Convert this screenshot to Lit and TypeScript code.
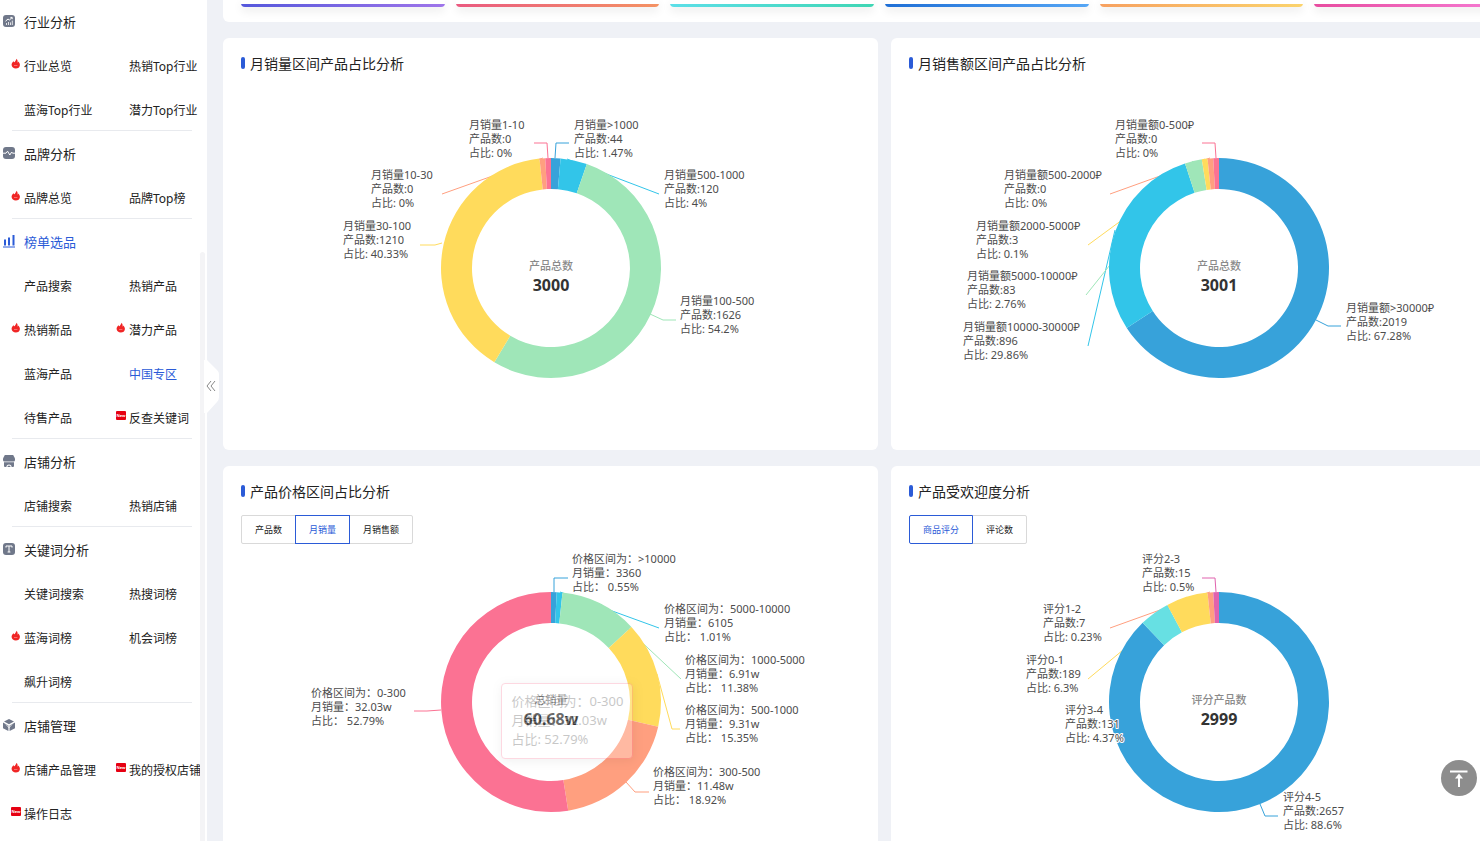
import { LitElement, html, svg, css, nothing } from "lit";
import { customElement, property } from "lit/decorators.js";
import { classMap } from "lit/directives/class-map.js";

type Point = [number, number];
interface Slice { color: string; to: number; line: Point[]; }
interface Label { x: number; y: number; rows: string[]; }
interface Chart {
  title: string;
  caption: string;
  total: string;
  tabs?: string[];
  active?: number;
  tooltip?: string[];
  slices: Slice[];
  labels: Label[];
}
interface Item { text: string; mark?: "hot" | "new"; active?: boolean; }
interface Group { title: string; icon: string; active?: boolean; items: Item[]; }

const BLUE = "#37a2da";
const CYAN = "#32c5e9";
const GREEN = "#9fe6b8";
const YELLOW = "#ffdb5c";
const SALMON = "#ff9f7f";
const PINK = "#fb7293";
const TEAL = "#67e0e3";
const MAGENTA = "#e062ae";

const groups: Group[] = [
  { title: "行业分析", icon: "trend", items: [
    { text: "行业总览", mark: "hot" }, { text: "热销Top行业" },
    { text: "蓝海Top行业" }, { text: "潜力Top行业" } ] },
  { title: "品牌分析", icon: "pulse", items: [
    { text: "品牌总览", mark: "hot" }, { text: "品牌Top榜" } ] },
  { title: "榜单选品", icon: "bars", active: true, items: [
    { text: "产品搜索" }, { text: "热销产品" },
    { text: "热销新品", mark: "hot" }, { text: "潜力产品", mark: "hot" },
    { text: "蓝海产品" }, { text: "中国专区", active: true },
    { text: "待售产品" }, { text: "反查关键词", mark: "new" } ] },
  { title: "店铺分析", icon: "shop", items: [
    { text: "店铺搜索" }, { text: "热销店铺" } ] },
  { title: "关键词分析", icon: "letter", items: [
    { text: "关键词搜索" }, { text: "热搜词榜" },
    { text: "蓝海词榜", mark: "hot" }, { text: "机会词榜" },
    { text: "飙升词榜" } ] },
  { title: "店铺管理", icon: "cube", items: [
    { text: "店铺产品管理", mark: "hot" }, { text: "我的授权店铺", mark: "new" },
    { text: "操作日志", mark: "new" } ] },
];

const charts: Chart[] = [
  {
    title: "月销量区间产品占比分析", caption: "产品总数", total: "3000",
    slices: [
      { color: BLUE, to: 5, line: [[18, -125], [5, -125], [4, -110]] },
      { color: CYAN, to: 19, line: [[108, -74], [16, -109]] },
      { color: GREEN, to: 211, line: [[125, 52], [112, 52], [99, 46]] },
      { color: YELLOW, to: 354, line: [[-131, -23], [-116, -23], [-109, -25]] },
      { color: SALMON, to: 357, line: [[-109, -74], [-8, -110]] },
      { color: PINK, to: 360, line: [[-17, -125], [-4, -125], [-3, -110]] },
    ],
    labels: [
      { x: -82, y: -139, rows: ["月销量1-10", "产品数:0", "占比: 0%"] },
      { x: 23, y: -139, rows: ["月销量>1000", "产品数:44", "占比: 1.47%"] },
      { x: 113, y: -89, rows: ["月销量500-1000", "产品数:120", "占比: 4%"] },
      { x: 129, y: 37, rows: ["月销量100-500", "产品数:1626", "占比: 54.2%"] },
      { x: -180, y: -89, rows: ["月销量10-30", "产品数:0", "占比: 0%"] },
      { x: -208, y: -38, rows: ["月销量30-100", "产品数:1210", "占比: 40.33%"] },
    ],
  },
  {
    title: "月销售额区间产品占比分析", caption: "产品总数", total: "3001",
    slices: [
      { color: BLUE, to: 237, line: [[122, 58], [109, 58], [97, 52]] },
      { color: CYAN, to: 342, line: [[-131, 78], [-104, -38]] },
      { color: GREEN, to: 351, line: [[-133, 27], [-26, -107]] },
      { color: YELLOW, to: 354, line: [[-131, -23], [-14, -109]] },
      { color: SALMON, to: 357, line: [[-109, -74], [-9, -110]] },
      { color: PINK, to: 360, line: [[-17, -125], [-4, -125], [-3, -110]] },
    ],
    labels: [
      { x: -104, y: -139, rows: ["月销量额0-500₽", "产品数:0", "占比: 0%"] },
      { x: -215, y: -89, rows: ["月销量额500-2000₽", "产品数:0", "占比: 0%"] },
      { x: -243, y: -38, rows: ["月销量额2000-5000₽", "产品数:3", "占比: 0.1%"] },
      { x: -252, y: 12, rows: ["月销量额5000-10000₽", "产品数:83", "占比: 2.76%"] },
      { x: -256, y: 63, rows: ["月销量额10000-30000₽", "产品数:896", "占比: 29.86%"] },
      { x: 127, y: 44, rows: ["月销量额>30000₽", "产品数:2019", "占比: 67.28%"] },
    ],
  },
  {
    title: "产品价格区间占比分析", caption: "总销量", total: "60.68w",
    tabs: ["产品数", "月销量", "月销售额"], active: 1,
    tooltip: ["价格区间为：0-300", "月销量：32.03w", "占比: 52.79%"],
    slices: [
      { color: BLUE, to: 3, line: [[17, -124], [3, -124], [3, -110]] },
      { color: CYAN, to: 6, line: [[108, -74], [9, -110]] },
      { color: GREEN, to: 47, line: [[130, -23], [50, -98]] },
      { color: YELLOW, to: 103, line: [[129, 27], [121, 27], [106, -28]] },
      { color: SALMON, to: 171, line: [[98, 90], [84, 90], [75, 80]] },
      { color: PINK, to: 360, line: [[-137, 9], [-124, 9], [-110, 8]] },
    ],
    labels: [
      { x: 21, y: -139, rows: ["价格区间为：>10000", "月销量：3360", "占比： 0.55%"] },
      { x: 113, y: -89, rows: ["价格区间为：5000-10000", "月销量：6105", "占比： 1.01%"] },
      { x: 134, y: -38, rows: ["价格区间为：1000-5000", "月销量：6.91w", "占比： 11.38%"] },
      { x: 134, y: 12, rows: ["价格区间为：500-1000", "月销量：9.31w", "占比： 15.35%"] },
      { x: 102, y: 74, rows: ["价格区间为：300-500", "月销量：11.48w", "占比： 18.92%"] },
      { x: -240, y: -5, rows: ["价格区间为：0-300", "月销量：32.03w", "占比： 52.79%"] },
    ],
  },
  {
    title: "产品受欢迎度分析", caption: "评分产品数", total: "2999",
    tabs: ["商品评分", "评论数"], active: 0,
    slices: [
      { color: BLUE, to: 316, line: [[59, 114], [46, 114], [41, 102]] },
      { color: TEAL, to: 332, line: [] },
      { color: YELLOW, to: 354, line: [[-131, -23], [-32, -105]] },
      { color: SALMON, to: 357, line: [[-109, -74], [-9, -110]] },
      { color: MAGENTA, to: 360, line: [[-17, -124], [-4, -124], [-3, -110]] },
    ],
    labels: [
      { x: -77, y: -139, rows: ["评分2-3", "产品数:15", "占比: 0.5%"] },
      { x: -176, y: -89, rows: ["评分1-2", "产品数:7", "占比: 0.23%"] },
      { x: -193, y: -38, rows: ["评分0-1", "产品数:189", "占比: 6.3%"] },
      { x: -154, y: 12, rows: ["评分3-4", "产品数:131", "占比: 4.37%"] },
      { x: 64, y: 99, rows: ["评分4-5", "产品数:2657", "占比: 88.6%"] },
    ],
  },
];

const polar = (r: number, deg: number): string => {
  const a = (deg * Math.PI) / 180;
  return `${(r * Math.sin(a)).toFixed(2)} ${(-r * Math.cos(a)).toFixed(2)}`;
};

const sector = (from: number, to: number): string => {
  const large = to - from > 180 ? 1 : 0;
  return `M${polar(110, from)}A110 110 0 ${large} 1 ${polar(110, to)}L${polar(79, to)}A79 79 0 ${large} 0 ${polar(79, from)}Z`;
};

@customElement("donut-card")
export class DonutCard extends LitElement {
  @property({ attribute: false }) chart!: Chart;

  static styles = css`
    :host { display: block; background: #fff; border-radius: 6px; color: #222; }
    .title {
      display: flex; align-items: center; gap: 5px; height: 49px; margin: 0;
      padding: 0 18px; box-sizing: border-box;
      font-size: 14px; font-weight: 400;
    }
    .title::before { content: ""; width: 4px; height: 12px; border-radius: 2px; background: #2b5bd7; }
    .tabs { display: flex; padding: 0 18px; }
    .tab {
      height: 29px; padding: 0 13px; margin: 0 0 0 -1px; border: 1px solid #d9d9d9;
      background: #fff; color: #222; font: inherit; font-size: 9px; position: relative;
    }
    .tab:first-child { margin-left: 0; border-radius: 2px 0 0 2px; }
    .tab:last-child { border-radius: 0 2px 2px 0; }
    .tab.on { border-color: #2b5bd7; color: #2b5bd7; z-index: 1; }
    .plot { position: relative; }
    .plot svg { display: block; width: 100%; overflow: visible; }
    .tall { height: 363px; }
    .short { height: 334px; }
    .label { font-size: 11px; fill: #4c4c4c; stroke: #fff; stroke-width: 2px; paint-order: stroke; stroke-linejoin: round; }
    .leader { fill: none; stroke-width: 1px; }
    .caption { font-size: 11px; font-weight: 500; fill: #8a8a8a; text-anchor: middle; }
    .total { font-size: 16px; font-weight: 700; fill: #333; text-anchor: middle; }
    .tooltip {
      position: absolute; left: calc(50% - 50px); top: 139px; box-sizing: border-box;
      padding: 8px 9px 9px 10px; border: 1px solid #fb7293; border-radius: 4px;
      background: #fff; color: #333; font-size: 13px; line-height: 19px; white-space: nowrap;
      box-shadow: 1px 2px 10px rgba(0, 0, 0, 0.2); opacity: 0.27;
    }
  `;

  render() {
    const c = this.chart;
    let from = 0;
    const arcs = c.slices.map((s) => {
      const d = sector(from, s.to);
      from = s.to;
      return svg`<path d=${d} fill=${s.color}></path>`;
    });
    const view = c.tabs ? "-328 -158 655 334" : "-328 -181 655 363";
    return html`
      <h2 class="title">${c.title}</h2>
      ${c.tabs
        ? html`<div class="tabs">
            ${c.tabs.map((t, i) => html`<button class=${classMap({ tab: true, on: i === c.active })}>${t}</button>`)}
          </div>`
        : nothing}
      <div class="plot">
        <svg class=${c.tabs ? "short" : "tall"} viewBox=${view} role="img" aria-label=${c.title}>
          ${c.slices.map((s) => svg`<polyline class="leader" stroke=${s.color} points=${s.line.map((p) => p.join(",")).join(" ")}></polyline>`)}
          ${arcs}
          ${c.labels.map((l) => svg`<text class="label">${l.rows.map(
            (r, i) => svg`<tspan x=${l.x} y=${l.y + i * 14}>${r}</tspan>`)}</text>`)}
          <text class="caption" x="0" y="2">${c.caption}</text>
          <text class="total" x="0" y="23">${c.total}</text>
        </svg>
        ${c.tooltip ? html`<div class="tooltip">${c.tooltip.map((r) => html`<div>${r}</div>`)}</div>` : nothing}
      </div>
    `;
  }
}

const groupIcons: Record<string, unknown> = {
  trend: svg`<rect width="12" height="12" rx="3" fill="#70788a"></rect>
    <path d="M2.5 6.2L5 4l1.4 1L9 2.6M7.4 2.4h1.8v1.8" stroke="#fff" fill="none"></path>
    <path d="M3.5 8v2M5.5 7v3M7.5 7.4V10M9.3 5.6V10" stroke="#fff" stroke-width=".8"></path>`,
  pulse: svg`<rect width="12" height="12" rx="3" fill="#70788a"></rect>
    <path d="M0 6.2h3l1.6-2 2.2 3.8 1.9-3 .8 1.2H12" stroke="#fff" fill="none"></path>`,
  bars: svg`<path d="M0 12h12" stroke="#2b5bd7"></path>
    <path d="M2 4.500V10.500M6 2.500V10.500M10.500 0V10.500" stroke="#2b5bd7" stroke-width="2"></path>`,
  shop: svg`<path d="M1.8 0h8.4L12 3.4V5a1.5 1.5 0 0 1-1.5 1.5h-9A1.5 1.5 0 0 1 0 5V3.4z" fill="#70788a"></path>
    <path d="M1 7.2h10V11a1 1 0 0 1-1 1H8.6a2.600 2.600 0 0 0-5.200 0H2a1 1 0 0 1-1-1z" fill="#70788a"></path>
    <path d="M4.400 12a1.600 1.600 0 0 1 3.200 0z" fill="#70788a"></path>`,
  letter: svg`<rect width="12" height="12" rx="3" fill="#70788a"></rect>
    <path d="M3 4.6V3h6v1.6M6 3v6M4.6 9h2.8" stroke="#fff" fill="none"></path>`,
  cube: svg`<path d="M6 0l5 2.6-5 2.7-5-2.7z" fill="#70788a"></path>
    <path d="M0 3.6l5.4 2.9V12L0 9.2zM12 3.6L6.6 6.5V12L12 9.2z" fill="#70788a"></path>
    <path d="M3 5.4l3 3.4 3-3.4" stroke="#fff" stroke-width=".7" fill="none"></path>`,
};

@customElement("side-menu")
export class SideMenu extends LitElement {
  static styles = css`
    :host {
      display: flex; box-sizing: border-box; width: 207px; flex: none; height: 100vh;
      background: #fff; color: #222; position: relative;
    }
    .list { width: 200px; height: 100%; overflow: hidden; }
    .head {
      display: flex; align-items: center; gap: 9px; height: 44px; margin: 0;
      padding: 0 0 2px 3px; box-sizing: border-box; font-size: 13px; font-weight: 400;
    }
    .head svg { overflow: visible; }
    .items { display: grid; grid-template-columns: 105px 1fr; padding-left: 10px; }
    .group:not(:last-child)::after {
      content: ""; display: block; height: 1px; margin: -2px 8px 1px 12px; background: #e8eaee;
    }
    .item {
      display: flex; align-items: center; gap: 3px; height: 44px; white-space: nowrap;
      color: inherit; text-decoration: none; font-size: 12px;
    }
    .on { color: #2b5bd7; }
    .mark { width: 11px; height: 13px; padding-bottom: 3px; flex: none; }
    .badge { font-size: 4px; font-weight: 700; fill: #fff; text-anchor: middle; }
    .track { width: 5px; display: flex; flex-direction: column; justify-content: flex-end; }
    .thumb { height: 70%; background: #f4f4f6; border-radius: 3px 3px 0 0; }
    .fold {
      position: absolute; left: 204px; top: 359px; z-index: 2; width: 15px; height: 54px;
      padding: 0; border: 0; background: none;
    }
    .fold svg { display: block; }
  `;

  private mark(kind?: "hot" | "new") {
    if (kind === "hot") {
      return svg`<path d="M6.400 0.800C6.500 2.400 5 3 4.600 4.300 4.100 4.100 3.800 3.700 3.700 3.200 2.300 4.200 1.500 5.500 1.600 7 1.800 9.200 3.600 10.600 5.800 10.600s4-1.300 4.100-3.600C10 5.600 9.300 4.400 8.200 3.400 8.200 4 8 4.400 7.600 4.600 7.900 3.200 7.500 1.700 6.400.8z" fill="#f02626"></path>
        <path d="M4 7.500h3.400" stroke="#fa8080" stroke-width=".8"></path>`;
    }
    if (kind === "new") {
      return svg`<rect x="1" y="1" width="10" height="9" rx="1" fill="#e60012"></rect><text class="badge" x="6" y="7">New</text>`;
    }
    return nothing;
  }

  render() {
    return html`
      <nav class="list">
        ${groups.map((g) => html`
          <section class="group">
            <h3 class=${classMap({ head: true, on: !!g.active })}>
              <svg width="12" height="12" viewBox="0 0 12 12">${groupIcons[g.icon]}</svg>${g.title}
            </h3>
            <div class="items">
              ${g.items.map((i) => html`
                <a class=${classMap({ item: true, on: !!i.active })} href="#">
                  <svg class="mark" viewBox="0 0 11 13">${this.mark(i.mark)}</svg>${i.text}
                </a>`)}
            </div>
          </section>`)}
      </nav>
      <div class="track"><div class="thumb"></div></div>
      <button class="fold" aria-label="收起">
        <svg width="15" height="54" viewBox="0 0 15 54">
          <path d="M3 1L13 11Q15 13 15 15V38Q15 41 13 43L3 54H0V1z" fill="#fff"></path>
          <path d="M7 22L3 27l4 5M11 22L7 27l4 5" fill="none" stroke="#888"></path>
        </svg>
      </button>
    `;
  }
}

@customElement("app-root")
export class AppRoot extends LitElement {
  static styles = css`
    :host {
      display: flex; height: 100vh; overflow: hidden; background: #eff1f6;
      font-family: "Noto Sans", "Noto Sans CJK SC", sans-serif;
    }
    .main { flex: 1; min-width: 0; padding: 0 16px; overflow: hidden; }
    .board { display: grid; grid-template-columns: repeat(2, minmax(655px, 1fr)); gap: 16px 13px; }
    .stats {
      grid-column: 1 / -1; display: grid; grid-template-columns: repeat(6, 1fr); gap: 11px;
      padding: 0 28px 15px 18px; background: #fff; border-radius: 0 0 6px 6px;
    }
    .stat { height: 7px; border-radius: 0 0 4px 4px; overflow: hidden; display: flex; align-items: flex-end; }
    .shade { border-radius: 0 0 4px 4px; box-shadow: 0 4px 10px rgba(0, 0, 0, 0.08); }
    .line { flex: 1; height: 3px; }
    .violet { background: linear-gradient(90deg, #5558dc, #9f75ea); }
    .coral { background: linear-gradient(90deg, #ea5a80, #f49263); }
    .mint { background: linear-gradient(90deg, #5cdfe8, #3fd6b4); }
    .azure { background: linear-gradient(90deg, #1f6fd6, #55a6f5); }
    .amber { background: linear-gradient(90deg, #f7a160, #fbd36c); }
    .rose { background: linear-gradient(90deg, #e84ca0, #f77fd8); }
    .top {
      position: fixed; right: 3px; bottom: 45px; width: 36px; height: 36px; padding: 0;
      border: 0; border-radius: 50%; background: #8d8d8d;
    }
    .top svg { display: block; }
  `;

  render() {
    return html`
      <side-menu></side-menu>
      <main class="main">
        <div class="board">
          <div class="stats">
            ${["violet", "coral", "mint", "azure", "amber", "rose"].map(
              (c) => html`<div class="shade"><div class="stat"><div class="line ${c}"></div></div></div>`)}
          </div>
          ${charts.map((c) => html`<donut-card .chart=${c}></donut-card>`)}
        </div>
      </main>
      <button class="top" aria-label="回到顶部">
        <svg width="36" height="36" viewBox="0 0 36 36">
          <path d="M9 11.500h17.500" stroke="#fff" stroke-width="2"></path>
          <path d="M18 27V17" stroke="#fff" stroke-width="2"></path>
          <path d="M18 13.500l4 5h-8z" fill="#fff"></path>
        </svg>
      </button>
    `;
  }
}
